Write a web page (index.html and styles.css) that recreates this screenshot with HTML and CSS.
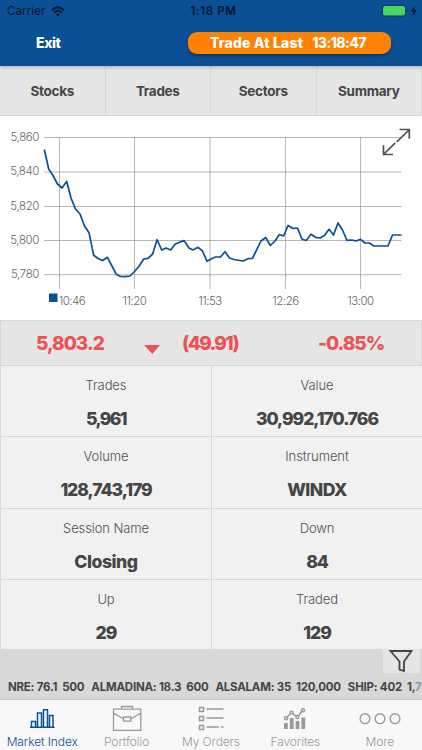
FILE: index.html
```html
<!DOCTYPE html>
<html lang="en">
<head>
<meta charset="utf-8">
<title>Market Index</title>
<link rel="stylesheet" href="styles.css">
</head>
<body>
<div class="app">
  <header class="header">
    <div class="status">
      <span class="carrier">Carrier</span>
      <svg class="wifi" viewBox="0 0 14 11"><path d="M1 4.200Q7-1.600 13 4.200M3.200 6.600Q7 3 10.800 6.600" fill="none" stroke="#06162b" stroke-width="1.900"/><path d="M4.900 8.200Q7 6.600 9.100 8.200L7 10.500z" fill="#06162b"/></svg>
      <span class="clock">1:18 PM</span>
      <svg class="battery" viewBox="0 0 36 12"><rect x=".5" y=".5" width="23" height="10.500" rx="2.500" fill="#49d665" stroke="#07365f"/><path d="M25 4v3.500q1.500-1.700 0-3.500" fill="#07365f"/><path d="M33 .8L28.800 6.500h2.800l-1 4.500 4.200-6h-2.700z" fill="#06162b"/></svg>
    </div>
    <div class="nav">
      <span class="exit">Exit</span>
      <div class="session"><span class="phase">Trade At Last</span><span class="time">13:18:47</span></div>
    </div>
  </header>
  <nav class="tabs">
    <span class="tab">Stocks</span><span class="tab">Trades</span><span class="tab">Sectors</span><span class="tab">Summary</span>
  </nav>
  <section class="chart">
    <svg class="plot" viewBox="0 116 422 204">
      <g class="grid">
        <path d="M44 137.500H401.500M44 172H401.500M44 206.500H401.500M44 240.500H401.500M44 274.700H401.500M59.500 137V289M134.500 137V289M210 137V289M285.500 137V289M360.500 137V289"/>
      </g>
      <g class="axis axis-y" text-anchor="end">
        <text x="39" y="140.500">5,860</text><text x="39" y="175">5,840</text><text x="39" y="209.500">5,820</text><text x="39" y="244">5,800</text><text x="39" y="278">5,780</text>
      </g>
      <g class="axis" text-anchor="middle">
        <text x="72" y="304.500">10:46</text><text x="134.500" y="304.500">11:20</text><text x="210" y="304.500">11:53</text><text x="285.500" y="304.500">12:26</text><text x="360.500" y="304.500">13:00</text>
      </g>
      <rect x="49" y="293.500" width="8.500" height="8.500" fill="#0b4f94"/>
      <polyline class="series" points="44.3,149.5 48.7,169 53,175.5 57.5,184 62,188 66.7,181.5 71,198 75.5,209 80,214 84.500,226 89,232.700 93.700,255.300 98,258.500 102.700,260.500 107.300,257.300 112,266 116.300,274.300 120.500,276.500 125,276.700 130,276 134.500,271.500 139,266.300 143.700,259 148,258.300 152.700,254 157,239.700 161.700,250 166,248 170.700,250 175,244.300 180,242 184,240.500 189,248 193,250 198,247.300 202.500,251 207,261.300 211,259 215.500,257 220.500,257 225,251.700 229.500,258 234,259.500 243,261 248,258.700 252.500,258.300 261,241 265.700,237.500 270.300,245.500 275,241 279.300,234.500 283.700,236 288,225.500 293,228.500 297.500,228 302,239.300 306.300,240.500 311,234.300 315.500,237.300 320,238 324.500,235.500 329,229.300 333.500,235 338,223 342.500,230 347,240.300 352,240 356,241 360.500,239.300 365,243 369.500,243 374,246 388,246 392.500,235 401.500,235"/>
      <path class="expand" d="M399.500 129.500H409.300V138.800M409 130L396.800 141.800M395.300 142.800L384 154M383.500 145.300V154.500H393"/>
    </svg>
  </section>
  <section class="quote">
    <span class="last">5,803.2</span>
    <svg class="down" viewBox="0 0 16 9"><path d="M0 0H16L8.300 9z" fill="#ed5253"/></svg>
    <span class="change">(49.91)</span>
    <span class="percent">-0.85%</span>
  </section>
  <section class="stats">
    <div class="stat"><span class="label">Trades</span><strong class="value short">5,961</strong></div>
    <div class="stat"><span class="label">Value</span><strong class="value">30,992,170.766</strong></div>
    <div class="stat"><span class="label">Volume</span><strong class="value">128,743,179</strong></div>
    <div class="stat"><span class="label">Instrument</span><strong class="value code">WINDX</strong></div>
    <div class="stat"><span class="label">Session Name</span><strong class="value word">Closing</strong></div>
    <div class="stat"><span class="label">Down</span><strong class="value">84</strong></div>
    <div class="stat"><span class="label">Up</span><strong class="value">29</strong></div>
    <div class="stat"><span class="label">Traded</span><strong class="value">129</strong></div>
  </section>
  <section class="ticker">
    <div class="filter"><svg class="funnel" viewBox="0 0 26 24"><path d="M2.500 2H23.500L16 12.500V22L11.500 20.500V12.500z"/></svg></div>
    <div class="tape"><span>NRE: 76.1&nbsp; 500</span><span>ALMADINA: 18.3&nbsp; 600</span><span>ALSALAM: 35&nbsp; 120,000</span><span>SHIP: 402&nbsp; 1,<span class="fade">7</span></span></div>
  </section>
  <footer class="tabbar">
    <div class="dest active">
      <svg class="icon" viewBox="0 0 32 28"><path d="M4 22.300H28.500M5.500 22V16.500H9.500V22M11.500 22V8H15.500V22M17.500 22V4.800H21.500V22M23.500 22V10.500H27V22" stroke-width="1.500"/></svg>
      <span class="name">Market Index</span>
    </div>
    <div class="dest">
      <svg class="icon" viewBox="0 0 32 28"><path d="M2.500 4.200H29.800V25.300H2.500zM10.500 4V1.500H21.500V4M2.500 8L12.500 14M29.800 8L19.800 14M12.500 12H19.800V16.200H12.500z" stroke-width="1.300"/></svg>
      <span class="name">Portfolio</span>
    </div>
    <div class="dest">
      <svg class="icon" viewBox="0 0 32 28"><path d="M4.500 2.500H8.500V6.500H4.500zM4.500 11.500H8.500V15.500H4.500zM4.500 20.500H8.500V24.500H4.500zM11.500 4H28.500M11.500 13H28.500M11.500 22H24M26 22H28.500" stroke-width="1.500"/></svg>
      <span class="name">My Orders</span>
    </div>
    <div class="dest">
      <svg class="icon" viewBox="0 0 32 28"><path class="solid" d="M5 18H8.800V24H5zM10.800 13H14.600V24H10.800zM16.600 16H20.400V24H16.600zM22.400 12.500H26.200V24H22.400z"/><path d="M8 12.300L11.300 8.700M13.700 8.600L17.200 11.200M19.400 10.800L23 6.300" stroke-width="1.400"/><circle cx="7" cy="13.300" r="1.500"/><circle cx="12.500" cy="7.600" r="1.500"/><circle cx="18.300" cy="12" r="1.500"/><circle cx="24" cy="5.200" r="1.500"/></svg>
      <span class="name">Favorites</span>
    </div>
    <div class="dest">
      <svg class="icon more" viewBox="0 0 42 28"><circle cx="6" cy="13.700" r="4.900"/><circle cx="21" cy="13.700" r="4.900"/><circle cx="36" cy="13.700" r="4.900"/></svg>
      <span class="name">More</span>
    </div>
  </footer>
</div>
</body>
</html>
```
FILE: styles.css
```css
* { box-sizing: border-box; }
body { margin: 0; background: #fff; font-family: Inter, "Liberation Sans", sans-serif; color: #454545; }
.app { width: 422px; height: 750px; display: flex; flex-direction: column; overflow: hidden; white-space: nowrap; }
.header { height: 66px; flex: none; background: #0b4f94; box-shadow: 0 1px 4px #0004; z-index: 1; }
.status { height: 22px; display: grid; grid-template-columns: 44px 14px 1fr 36px; align-items: center; padding: 0 4px 0 7px; color: #06162b; }
.carrier { font-size: 11.5px; letter-spacing: .1px; }
.wifi { width: 14px; height: 11px; }
.clock { justify-self: center; font-size: 11.5px; font-weight: 600; letter-spacing: .6px; padding-right: 20px; }
.battery { width: 36px; height: 12px; }
.nav { height: 44px; display: flex; justify-content: space-between; padding: 10px 31px 0 36px; color: #fff; font-weight: 800; }
.exit { font-size: 14px; line-height: 22px; letter-spacing: -.4px; }
.session { width: 203px; height: 22px; border-radius: 9px; background: #ff8203; padding: 0 25px 0 22px; display: flex; justify-content: space-between; font-size: 14px; line-height: 22px; box-shadow: 0 2px 3px #0005; }
.phase { letter-spacing: .15px; }
.time { letter-spacing: -.6px; }
.tabs { height: 50px; flex: none; display: grid; grid-template-columns: repeat(4, 1fr); background: #e6e6e6; border-bottom: 1px solid #d8d8d8; }
.tab { display: flex; align-items: center; justify-content: center; font-size: 13.5px; font-weight: 700; letter-spacing: -.3px; border-right: 1px solid #d8d8d8; }
.chart { height: 204px; flex: none; }
.plot { display: block; width: 422px; height: 204px; }
.grid { stroke: #909090; stroke-width: .65; fill: none; }
.axis { font-size: 11.5px; font-weight: 300; fill: #666; letter-spacing: -.5px; }
.axis-y { letter-spacing: -.4px; }
.series { fill: none; stroke: #0b4f94; stroke-width: 1.7; stroke-linejoin: round; }
.expand { fill: none; stroke: #505050; stroke-width: 1.7; }
.quote { height: 46px; flex: none; display: grid; grid-template-columns: 107px 39px 71px 64px; padding-left: 35px; align-items: center; background: #e6e6e6; border: 1px solid #d8d8d8; color: #ed5253; font-size: 19px; font-weight: 800; letter-spacing: -1px; }
.down { width: 16px; height: 9px; margin: 12px 0 0 1px; }
.change { letter-spacing: -1.6px; }
.percent { margin-left: 65px; }
.stats { height: 283px; flex: none; display: grid; grid-template-columns: 211px 211px; grid-template-rows: repeat(4, 71.3px); background: #f1f1f1; overflow: hidden; }
.stat { display: flex; flex-direction: column; align-items: center; padding-top: 9px; border-left: 1px solid #d8d8d8; border-bottom: 1px solid #d8d8d8; }
.label { font-size: 13px; line-height: 20px; font-weight: 300; letter-spacing: -.1px; color: #505050; }
.value { font-size: 17.6px; line-height: 24px; margin-top: 12px; font-weight: 800; letter-spacing: -1.05px; }
.short { letter-spacing: -1.6px; }
.code { letter-spacing: -.5px; }
.word { letter-spacing: -.45px; }
.ticker { height: 51px; flex: none; background: #d8d8d8; border-bottom: 1px solid #c4c4c4; overflow: hidden; }
.filter { width: 37px; height: 24px; margin-left: 383px; background: #e5e5e5; }
.funnel { display: block; width: 26px; height: 24px; margin-left: 5px; fill: none; stroke: #454545; stroke-width: 1.8; }
.tape { display: flex; gap: 7px; padding-left: 8px; height: 27px; line-height: 28px; font-size: 11.5px; font-weight: 700; letter-spacing: -.23px; }
.fade { opacity: .45; }
.tabbar { height: 50px; flex: none; display: grid; grid-template-columns: repeat(5, 84.4px); background: #f8f8f8; }
.dest { display: flex; flex-direction: column; align-items: center; color: #999; padding-top: 5px; }
.active { color: #0b4f94; }
.icon { width: 32px; height: 28px; fill: none; stroke: currentColor; stroke-width: 1.4; }
.more { width: 42px; }
.solid { fill: currentColor; stroke: none; }
.name { font-size: 12px; line-height: 17px; font-weight: 300; letter-spacing: -.1px; }
```
